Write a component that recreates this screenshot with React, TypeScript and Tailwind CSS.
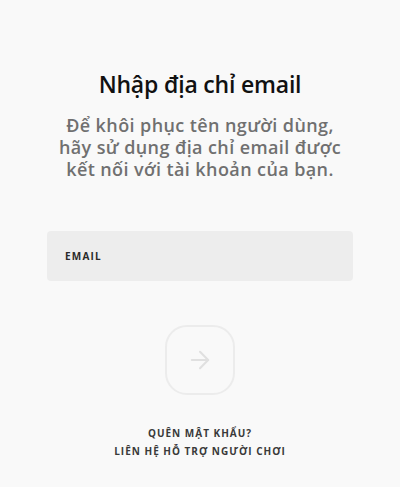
import { ArrowRight } from 'lucide-react';

export default function App() {
  return (
    <div
      className="w-[400px] h-[487px] bg-[#f9f9f9] flex flex-col items-center"
      style={{ fontFamily: '"Open Sans", "Noto Sans", sans-serif' }}
    >
      <h1 className="mt-[68px] text-[23px] leading-[32px] font-semibold text-[#111111] tracking-[-0.2px]">
        Nhập địa chỉ email
      </h1>
      <p className="mt-[14px] text-center text-[18px] leading-[22px] tracking-[0.4px] font-semibold text-[#707070]">
        Để khôi phục tên người dùng,
        <br />
        hãy sử dụng địa chỉ email được
        <br />
        kết nối với tài khoản của bạn.
      </p>

      <div className="mt-[51px] w-[306px] h-[50px] rounded-[4px] bg-[#ededed] flex items-center px-[18px]">
        <span className="text-[10px] font-bold tracking-[1.2px] text-[#2a2a2a]">EMAIL</span>
      </div>

      <button className="mt-[44px] w-[70px] h-[70px] rounded-[22px] border-2 border-[#ececec] flex items-center justify-center">
        <ArrowRight size={28} strokeWidth={1.8} color="#e0e0e0" />
      </button>

      <div className="mt-[31px] flex flex-col items-center gap-[4px] text-[10px] leading-[14px] font-bold tracking-[1px] text-[#3a3a3a]">
        <span>QUÊN MẬT KHẨU?</span>
        <span>LIÊN HỆ HỖ TRỢ NGƯỜI CHƠI</span>
      </div>
    </div>
  );
}
